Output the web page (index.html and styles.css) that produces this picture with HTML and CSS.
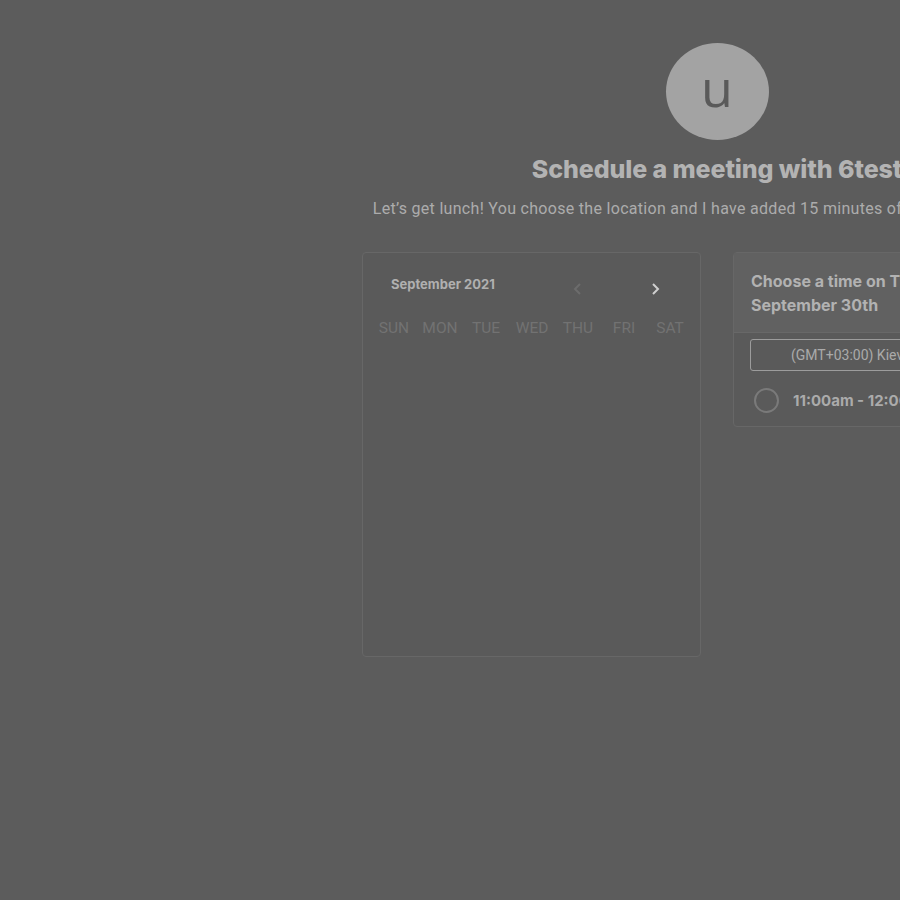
FILE: index.html
```html
<!DOCTYPE html>
<html>
<head>
<meta charset="utf-8">
<link rel="stylesheet" href="styles.css">
</head>
<body>
<div class="page">
  <div class="avatar">u</div>
  <h1 class="title">Schedule a meeting with 6test</h1>
  <p class="subtitle">Let’s get lunch! You choose the location and I have added 15 minutes of travel time each way.</p>
  <div class="cards">
    <div class="card calendar">
      <div class="cal-head">
        <span class="month">September 2021</span>
        <div class="navs">
          <svg class="nav prev" width="14" height="14" viewBox="0 0 14 14"><path d="M9 2 L4 7 L9 12" fill="none" stroke="currentColor" stroke-width="2"/></svg>
          <svg class="nav next" width="14" height="14" viewBox="0 0 14 14"><path d="M5 2 L10 7 L5 12" fill="none" stroke="currentColor" stroke-width="2"/></svg>
        </div>
      </div>
      <div class="weekdays">
        <span>SUN</span><span>MON</span><span>TUE</span><span>WED</span><span>THU</span><span>FRI</span><span>SAT</span>
      </div>
    </div>
    <div class="card times">
      <div class="times-head">Choose a time on Thursday,<br>September 30th</div>
      <div class="times-body">
        <div class="tz">(GMT+03:00) Kiev</div>
        <div class="slot"><span class="radio"></span><span class="slot-text">11:00am - 12:00pm</span></div>
      </div>
    </div>
  </div>
</div>
</body>
</html>
```
FILE: styles.css
```css
html, body {
  margin: 0;
  padding: 0;
  overflow: hidden;
  background: #5c5c5c;
}
.page {
  width: 1434px;
  display: flex;
  flex-direction: column;
  align-items: center;
  padding-top: 43px;
}
.avatar {
  width: 103px;
  height: 97px;
  border-radius: 50%;
  background: #a3a3a3;
  color: #5a5a5a;
  font-family: "Open Sans", sans-serif;
  font-size: 52px;
  line-height: 88px;
  text-align: center;
}
.title {
  margin: 14px 0 0;
  font-family: Inter, sans-serif;
  font-weight: 800;
  font-size: 25px;
  line-height: 30px;
  color: #b3b3b3;
  letter-spacing: -0.1px;
}
.subtitle {
  margin: 15px 0 0;
  font-family: Roboto, sans-serif;
  font-size: 16px;
  line-height: 20px;
  letter-spacing: 0.3px;
  color: #acacac;
}
.cards {
  display: flex;
  gap: 32px;
  margin-top: 33px;
  align-items: flex-start;
}
.card {
  width: 337px;
  border: 1px solid #676767;
  border-radius: 4px;
  background: #5a5a5a;
}
.calendar {
  height: 403px;
}
.cal-head {
  display: flex;
  align-items: center;
  justify-content: space-between;
  padding: 19px 38px 0 28px;
  height: 24px;
}
.month {
  font-family: Inter, sans-serif;
  font-weight: 700;
  font-size: 13px;
  color: #b0b0b0;
}
.navs {
  display: flex;
  gap: 63px;
  padding-top: 9px;
  padding-left: 2px;
}
.prev { color: #6c6c6c; }
.next { color: #cfcfcf; }
.weekdays {
  display: grid;
  grid-template-columns: repeat(7, 46px);
  padding: 23px 0 0 8px;
  font-family: Roboto, sans-serif;
  font-size: 15.5px;
  color: #727272;
}
.weekdays span { text-align: center; }
.times-head {
  background: #616161;
  border-bottom: 1px solid #686868;
  padding: 16px 17px 15px;
  font-family: Inter, sans-serif;
  font-weight: 700;
  font-size: 16px;
  line-height: 24px;
  color: #b2b2b2;
  white-space: nowrap;
}
.times-body {
  padding: 6px 0 13px 16px;
}
.tz {
  height: 30px;
  border: 1px solid #9c9c9c;
  border-radius: 3px;
  font-family: Roboto, sans-serif;
  font-size: 14px;
  line-height: 30px;
  color: #aaaaaa;
  padding-left: 40px;
  white-space: nowrap;
}
.slot {
  display: flex;
  align-items: center;
  gap: 14px;
  margin-top: 17px;
  padding-left: 4px;
}
.radio {
  width: 21px;
  height: 21px;
  border: 2px solid #7a7a7a;
  border-radius: 50%;
}
.slot-text {
  font-family: Inter, sans-serif;
  font-weight: 700;
  font-size: 15px;
  color: #ababab;
  white-space: nowrap;
}
```
